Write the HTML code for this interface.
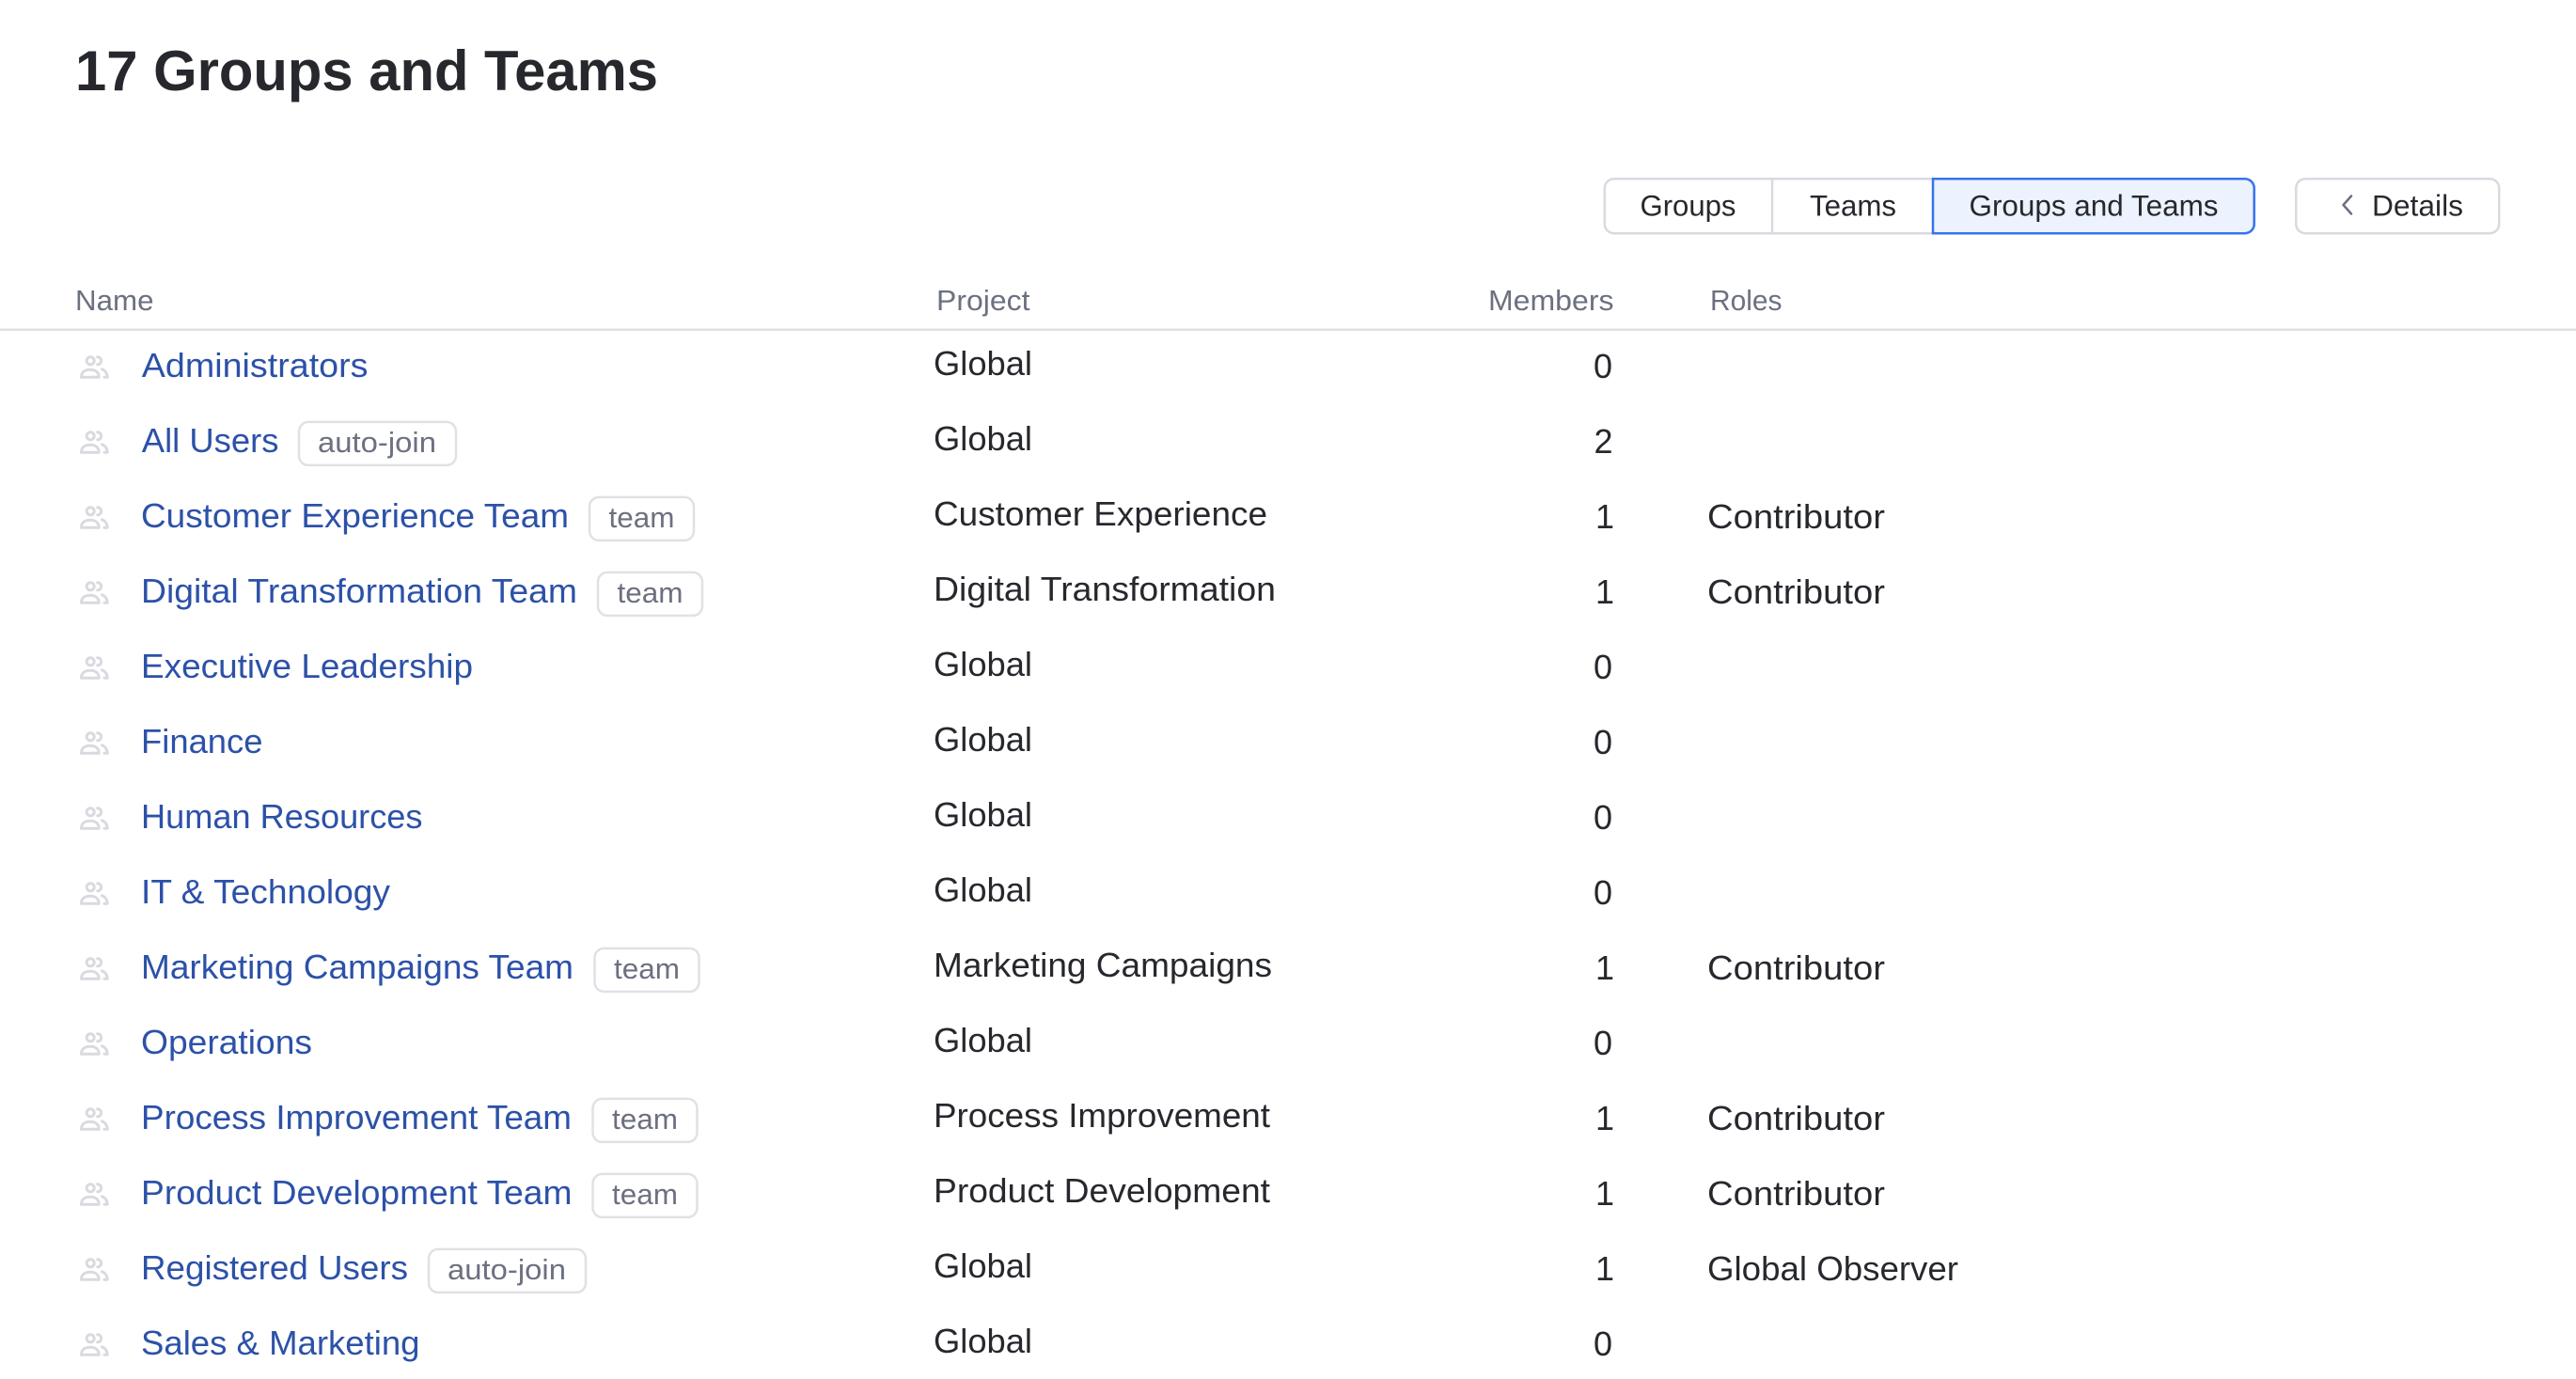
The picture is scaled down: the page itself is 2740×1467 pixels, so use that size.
<!DOCTYPE html>
<html lang="en">
<head>
<meta charset="utf-8">
<title>17 Groups and Teams</title>
<style>
html,body{margin:0;padding:0;background:#fff;width:2740px;height:1467px;overflow:hidden}
svg{display:block}
text{font-family:"Liberation Sans",sans-serif}
.t{font-size:60px;font-weight:700;fill:#26282d}
.h{font-size:30.5px;fill:#6c7080}
.n{font-size:36px;fill:#2c51a8}
.p{font-size:36px;fill:#26282d}
.m{font-size:36px;fill:#26282d;text-anchor:end}
.b{font-size:31px;fill:#6c7080}
.btn{font-size:31.5px;fill:#26282d}
.bd{fill:#fff;stroke:#e0e1e6;stroke-width:2.5}
</style>
</head>
<body>
<svg width="2740" height="1467" viewBox="0 0 2740 1467" xmlns="http://www.w3.org/2000/svg">
<defs>
<g id="i" fill="none" stroke="#d9dae0" stroke-width="3" stroke-linecap="round" stroke-linejoin="round">
<circle cx="11.2" cy="5.5" r="4"/>
<path d="M18.7 1.5A4 4 0 0 1 18.7 9.5"/>
<path d="M1.5 22.9C1.5 17.5 5.5 14.9 10.85 14.9C16.2 14.9 20.2 17.5 20.2 22.9Z"/>
<path d="M23.5 14.5C27 16 29 19 29.2 22.9L26 22.9"/>
</g>
</defs>

<text class="t" x="80" y="96" textLength="620" lengthAdjust="spacingAndGlyphs">17 Groups and Teams</text>

<!-- button group -->
<rect x="1706.8" y="190.2" width="691" height="58" rx="10" fill="#fff" stroke="#d9dae0" stroke-width="2.5"/>
<line x1="1885" y1="190" x2="1885" y2="248" stroke="#d9dae0" stroke-width="2.5"/>
<path d="M2056 190.2H2387.7A10 10 0 0 1 2397.7 200.2V238.2A10 10 0 0 1 2387.7 248.2H2056Z" fill="#ecf2fe" stroke="#3574f0" stroke-width="2.5"/>
<text class="btn" x="1744.5" y="229.5" textLength="102" lengthAdjust="spacingAndGlyphs">Groups</text>
<text class="btn" x="1925" y="229.5" textLength="92" lengthAdjust="spacingAndGlyphs">Teams</text>
<text class="btn" x="2094.5" y="229.5" textLength="265" lengthAdjust="spacingAndGlyphs">Groups and Teams</text>
<rect x="2442.2" y="190.2" width="216" height="58" rx="10" fill="#fff" stroke="#d9dae0" stroke-width="2.5"/>
<path d="M2501 208.5L2492.5 218L2501 227.5" fill="none" stroke="#6c7080" stroke-width="2.5" stroke-linecap="round" stroke-linejoin="round"/>
<text class="btn" x="2523" y="229.5" textLength="97" lengthAdjust="spacingAndGlyphs">Details</text>

<!-- header -->
<text class="h" x="80" y="330" textLength="83.5" lengthAdjust="spacingAndGlyphs">Name</text>
<text class="h" x="996" y="330" textLength="99.5" lengthAdjust="spacingAndGlyphs">Project</text>
<text class="h" x="1583" y="330" textLength="133.5" lengthAdjust="spacingAndGlyphs">Members</text>
<text class="h" x="1819" y="330" textLength="76.5" lengthAdjust="spacingAndGlyphs">Roles</text>
<rect x="0" y="349.5" width="2740" height="2.5" fill="#e0e1e6"/>

<!-- icons -->
<use href="#i" x="85" y="378.3"/>
<use href="#i" x="85" y="458.3"/>
<use href="#i" x="85" y="538.3"/>
<use href="#i" x="85" y="618.3"/>
<use href="#i" x="85" y="698.3"/>
<use href="#i" x="85" y="778.3"/>
<use href="#i" x="85" y="858.3"/>
<use href="#i" x="85" y="938.3"/>
<use href="#i" x="85" y="1018.3"/>
<use href="#i" x="85" y="1098.3"/>
<use href="#i" x="85" y="1178.3"/>
<use href="#i" x="85" y="1258.3"/>
<use href="#i" x="85" y="1338.3"/>
<use href="#i" x="85" y="1418.3"/>

<!-- names -->
<text class="n" x="150.8" y="401" textLength="240.7" lengthAdjust="spacingAndGlyphs">Administrators</text>
<text class="n" x="150.8" y="481" textLength="145.7" lengthAdjust="spacingAndGlyphs">All Users</text>
<text class="n" x="150" y="561" textLength="455" lengthAdjust="spacingAndGlyphs">Customer Experience Team</text>
<text class="n" x="150" y="641" textLength="464" lengthAdjust="spacingAndGlyphs">Digital Transformation Team</text>
<text class="n" x="150" y="721" textLength="353" lengthAdjust="spacingAndGlyphs">Executive Leadership</text>
<text class="n" x="150" y="801" textLength="129.5" lengthAdjust="spacingAndGlyphs">Finance</text>
<text class="n" x="150" y="881" textLength="299.5" lengthAdjust="spacingAndGlyphs">Human Resources</text>
<text class="n" x="150" y="961" textLength="265" lengthAdjust="spacingAndGlyphs">IT &amp; Technology</text>
<text class="n" x="150" y="1041" textLength="460" lengthAdjust="spacingAndGlyphs">Marketing Campaigns Team</text>
<text class="n" x="150" y="1121" textLength="182" lengthAdjust="spacingAndGlyphs">Operations</text>
<text class="n" x="150" y="1201" textLength="458" lengthAdjust="spacingAndGlyphs">Process Improvement Team</text>
<text class="n" x="150" y="1281" textLength="458.5" lengthAdjust="spacingAndGlyphs">Product Development Team</text>
<text class="n" x="150" y="1361" textLength="284" lengthAdjust="spacingAndGlyphs">Registered Users</text>
<text class="n" x="150" y="1441" textLength="296.5" lengthAdjust="spacingAndGlyphs">Sales &amp; Marketing</text>

<!-- badges -->
<rect class="bd" x="318" y="448.9" width="167" height="46" rx="10"/>
<text class="b" x="338" y="481" textLength="126" lengthAdjust="spacingAndGlyphs">auto-join</text>
<rect class="bd" x="627" y="528.9" width="111" height="46" rx="10"/>
<text class="b" x="647.5" y="561" textLength="70" lengthAdjust="spacingAndGlyphs">team</text>
<rect class="bd" x="636" y="608.9" width="111" height="46" rx="10"/>
<text class="b" x="656.5" y="641" textLength="70" lengthAdjust="spacingAndGlyphs">team</text>
<rect class="bd" x="632.5" y="1008.9" width="111" height="46" rx="10"/>
<text class="b" x="653" y="1041" textLength="70" lengthAdjust="spacingAndGlyphs">team</text>
<rect class="bd" x="630.5" y="1168.9" width="111" height="46" rx="10"/>
<text class="b" x="651" y="1201" textLength="70" lengthAdjust="spacingAndGlyphs">team</text>
<rect class="bd" x="630.5" y="1248.9" width="111" height="46" rx="10"/>
<text class="b" x="651" y="1281" textLength="70" lengthAdjust="spacingAndGlyphs">team</text>
<rect class="bd" x="456" y="1328.9" width="167" height="46" rx="10"/>
<text class="b" x="476" y="1361" textLength="126" lengthAdjust="spacingAndGlyphs">auto-join</text>

<!-- project -->
<text class="p" x="993" y="398.8" textLength="105" lengthAdjust="spacingAndGlyphs">Global</text>
<text class="p" x="993" y="478.8" textLength="105" lengthAdjust="spacingAndGlyphs">Global</text>
<text class="p" x="993" y="558.8" textLength="355" lengthAdjust="spacingAndGlyphs">Customer Experience</text>
<text class="p" x="993" y="638.8" textLength="364" lengthAdjust="spacingAndGlyphs">Digital Transformation</text>
<text class="p" x="993" y="718.8" textLength="105" lengthAdjust="spacingAndGlyphs">Global</text>
<text class="p" x="993" y="798.8" textLength="105" lengthAdjust="spacingAndGlyphs">Global</text>
<text class="p" x="993" y="878.8" textLength="105" lengthAdjust="spacingAndGlyphs">Global</text>
<text class="p" x="993" y="958.8" textLength="105" lengthAdjust="spacingAndGlyphs">Global</text>
<text class="p" x="993" y="1038.8" textLength="360" lengthAdjust="spacingAndGlyphs">Marketing Campaigns</text>
<text class="p" x="993" y="1118.8" textLength="105" lengthAdjust="spacingAndGlyphs">Global</text>
<text class="p" x="993" y="1198.8" textLength="358" lengthAdjust="spacingAndGlyphs">Process Improvement</text>
<text class="p" x="993" y="1278.8" textLength="358" lengthAdjust="spacingAndGlyphs">Product Development</text>
<text class="p" x="993" y="1358.8" textLength="105" lengthAdjust="spacingAndGlyphs">Global</text>
<text class="p" x="993" y="1438.8" textLength="105" lengthAdjust="spacingAndGlyphs">Global</text>

<!-- members -->
<text class="m" x="1715" y="402">0</text>
<text class="m" x="1715.5" y="482">2</text>
<text class="m" x="1717" y="562">1</text>
<text class="m" x="1717" y="642">1</text>
<text class="m" x="1715" y="722">0</text>
<text class="m" x="1715" y="802">0</text>
<text class="m" x="1715" y="882">0</text>
<text class="m" x="1715" y="962">0</text>
<text class="m" x="1717" y="1042">1</text>
<text class="m" x="1715" y="1122">0</text>
<text class="m" x="1717" y="1202">1</text>
<text class="m" x="1717" y="1282">1</text>
<text class="m" x="1717" y="1362">1</text>
<text class="m" x="1715" y="1442">0</text>

<!-- roles -->
<text class="p" x="1816" y="562" textLength="189" lengthAdjust="spacingAndGlyphs">Contributor</text>
<text class="p" x="1816" y="642" textLength="189" lengthAdjust="spacingAndGlyphs">Contributor</text>
<text class="p" x="1816" y="1042" textLength="189" lengthAdjust="spacingAndGlyphs">Contributor</text>
<text class="p" x="1816" y="1202" textLength="189" lengthAdjust="spacingAndGlyphs">Contributor</text>
<text class="p" x="1816" y="1282" textLength="189" lengthAdjust="spacingAndGlyphs">Contributor</text>
<text class="p" x="1816" y="1362" textLength="267" lengthAdjust="spacingAndGlyphs">Global Observer</text>
</svg>
</body>
</html>
